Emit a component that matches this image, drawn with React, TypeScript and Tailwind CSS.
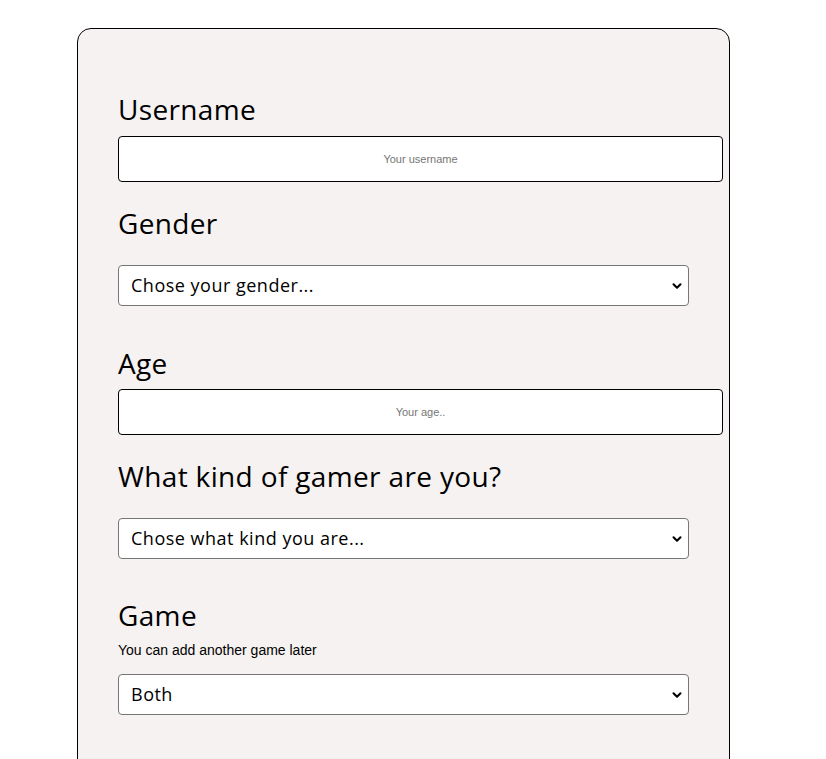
import { ChevronDown } from "lucide-react";

const heading = "font-['Open_Sans',sans-serif] text-[28px] leading-[34px] tracking-[0.35px] text-black font-medium";
const input =
  "box-content block w-full h-[12px] p-4 bg-white border border-black rounded-[4px] text-center font-['Liberation_Sans',Arial,sans-serif] text-[11px] leading-[12px] placeholder:text-[#757575] outline-none";

function Select({ value, className }: { value: string; className: string }) {
  return (
    <div className={`relative w-full ${className}`}>
      <select
        defaultValue={value}
        className="appearance-none block w-full h-[41px] pl-3 pr-8 bg-white border border-[#767676] rounded-[4px] font-['Open_Sans',sans-serif] text-[18px] tracking-[0.5px] font-medium text-black outline-none"
      >
        <option>{value}</option>
      </select>
      <ChevronDown
        className="absolute right-[5px] top-[14px] w-[14px] h-[14px] pointer-events-none text-black"
        strokeWidth={3.5}
      />
    </div>
  );
}

export default function App() {
  return (
    <div className="min-h-screen bg-white pt-[28px] pl-[77px]">
      <form className="w-[653px] h-[760px] bg-[#f6f2f1] border border-black rounded-[14px] pt-[63px] px-[40px]">
        <h2 className={heading}>Username</h2>
        <input className={`${input} mt-[10px]`} placeholder="Your username" />

        <h2 className={`${heading} mt-[24px]`}>Gender</h2>
        <Select value="Chose your gender..." className="mt-[25px]" />

        <h2 className={`${heading} mt-[40px]`}>Age</h2>
        <input className={`${input} mt-[9px]`} placeholder="Your age.." />

        <h2 className={`${heading} mt-[24px]`}>What kind of gamer are you?</h2>
        <Select value="Chose what kind you are..." className="mt-[25px]" />

        <h2 className={`${heading} mt-[39px]`}>Game</h2>
        <p className="mt-[10px] font-['Liberation_Sans',Arial,sans-serif] text-[14px] leading-[16px] text-black">
          You can add another game later
        </p>
        <Select value="Both" className="mt-[16px]" />
      </form>
    </div>
  );
}
